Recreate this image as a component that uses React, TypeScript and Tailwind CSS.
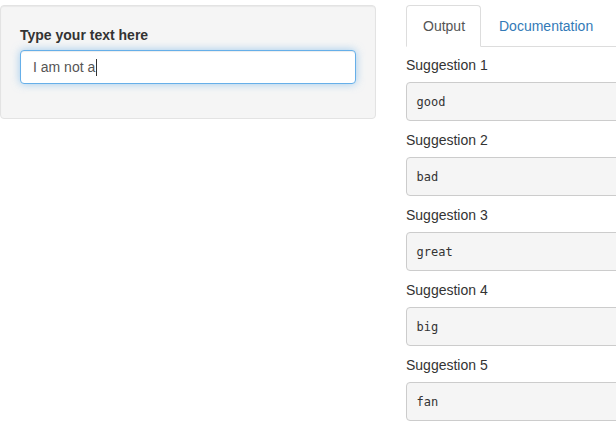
const suggestions = ["good", "bad", "great", "big", "fan"];

export default function App() {
  return (
    <div
      className="w-[616px] h-[433px] overflow-hidden bg-white text-[14px] leading-[20px] text-[#333]"
      style={{ fontFamily: '"Liberation Sans", Arial, sans-serif' }}
    >
      <div className="flex items-start pt-[5px]">
        {/* sidebar well */}
        <div className="w-[376px] shrink-0 rounded-[4px] border border-[#e3e3e3] bg-[#f5f5f5] p-[19px] shadow-[inset_0_1px_1px_rgba(0,0,0,0.05)]">
          <div className="mb-[15px]">
            <div className="mb-[5px] font-bold">Type your text here</div>
            <div className="flex h-[34px] items-center rounded-[4px] border border-[#66afe9] bg-white px-[12px] text-[#555] shadow-[inset_0_1px_1px_rgba(0,0,0,0.075),0_0_8px_rgba(102,175,233,0.6)]">
              <span>I am not a</span>
              <span className="ml-[1px] h-[17px] w-[1px] bg-[#333]" />
            </div>
          </div>
        </div>

        {/* main panel */}
        <div className="ml-[30px] w-[240px] shrink-0">
          <div className="flex border-b border-[#ddd]">
            <div className="-mb-px mr-[2px] w-[75px] rounded-t-[4px] border border-[#ddd] border-b-white bg-white py-[10px] pl-[16px] text-[#555]">
              Output
            </div>
            <div className="-mb-px mr-[2px] rounded-t-[4px] border border-transparent px-[15px] py-[10px] text-[#337ab7]">
              Documentation
            </div>
          </div>

          <div className="pt-[8px]">
            {suggestions.map((s, i) => (
              <div key={s}>
                <div className="h-[20px]">Suggestion {i + 1}</div>
                <pre
                  className="mb-[9px] mt-[7px] h-[39px] rounded-[4px] border border-[#ccc] bg-[#f5f5f5] px-[9.5px] py-[9.5px] text-[12px] leading-[18px] text-[#333]"
                  style={{ fontFamily: '"DejaVu Sans Mono", "Liberation Mono", monospace' }}
                >
                  {s}
                </pre>
              </div>
            ))}
          </div>
        </div>
      </div>
    </div>
  );
}
